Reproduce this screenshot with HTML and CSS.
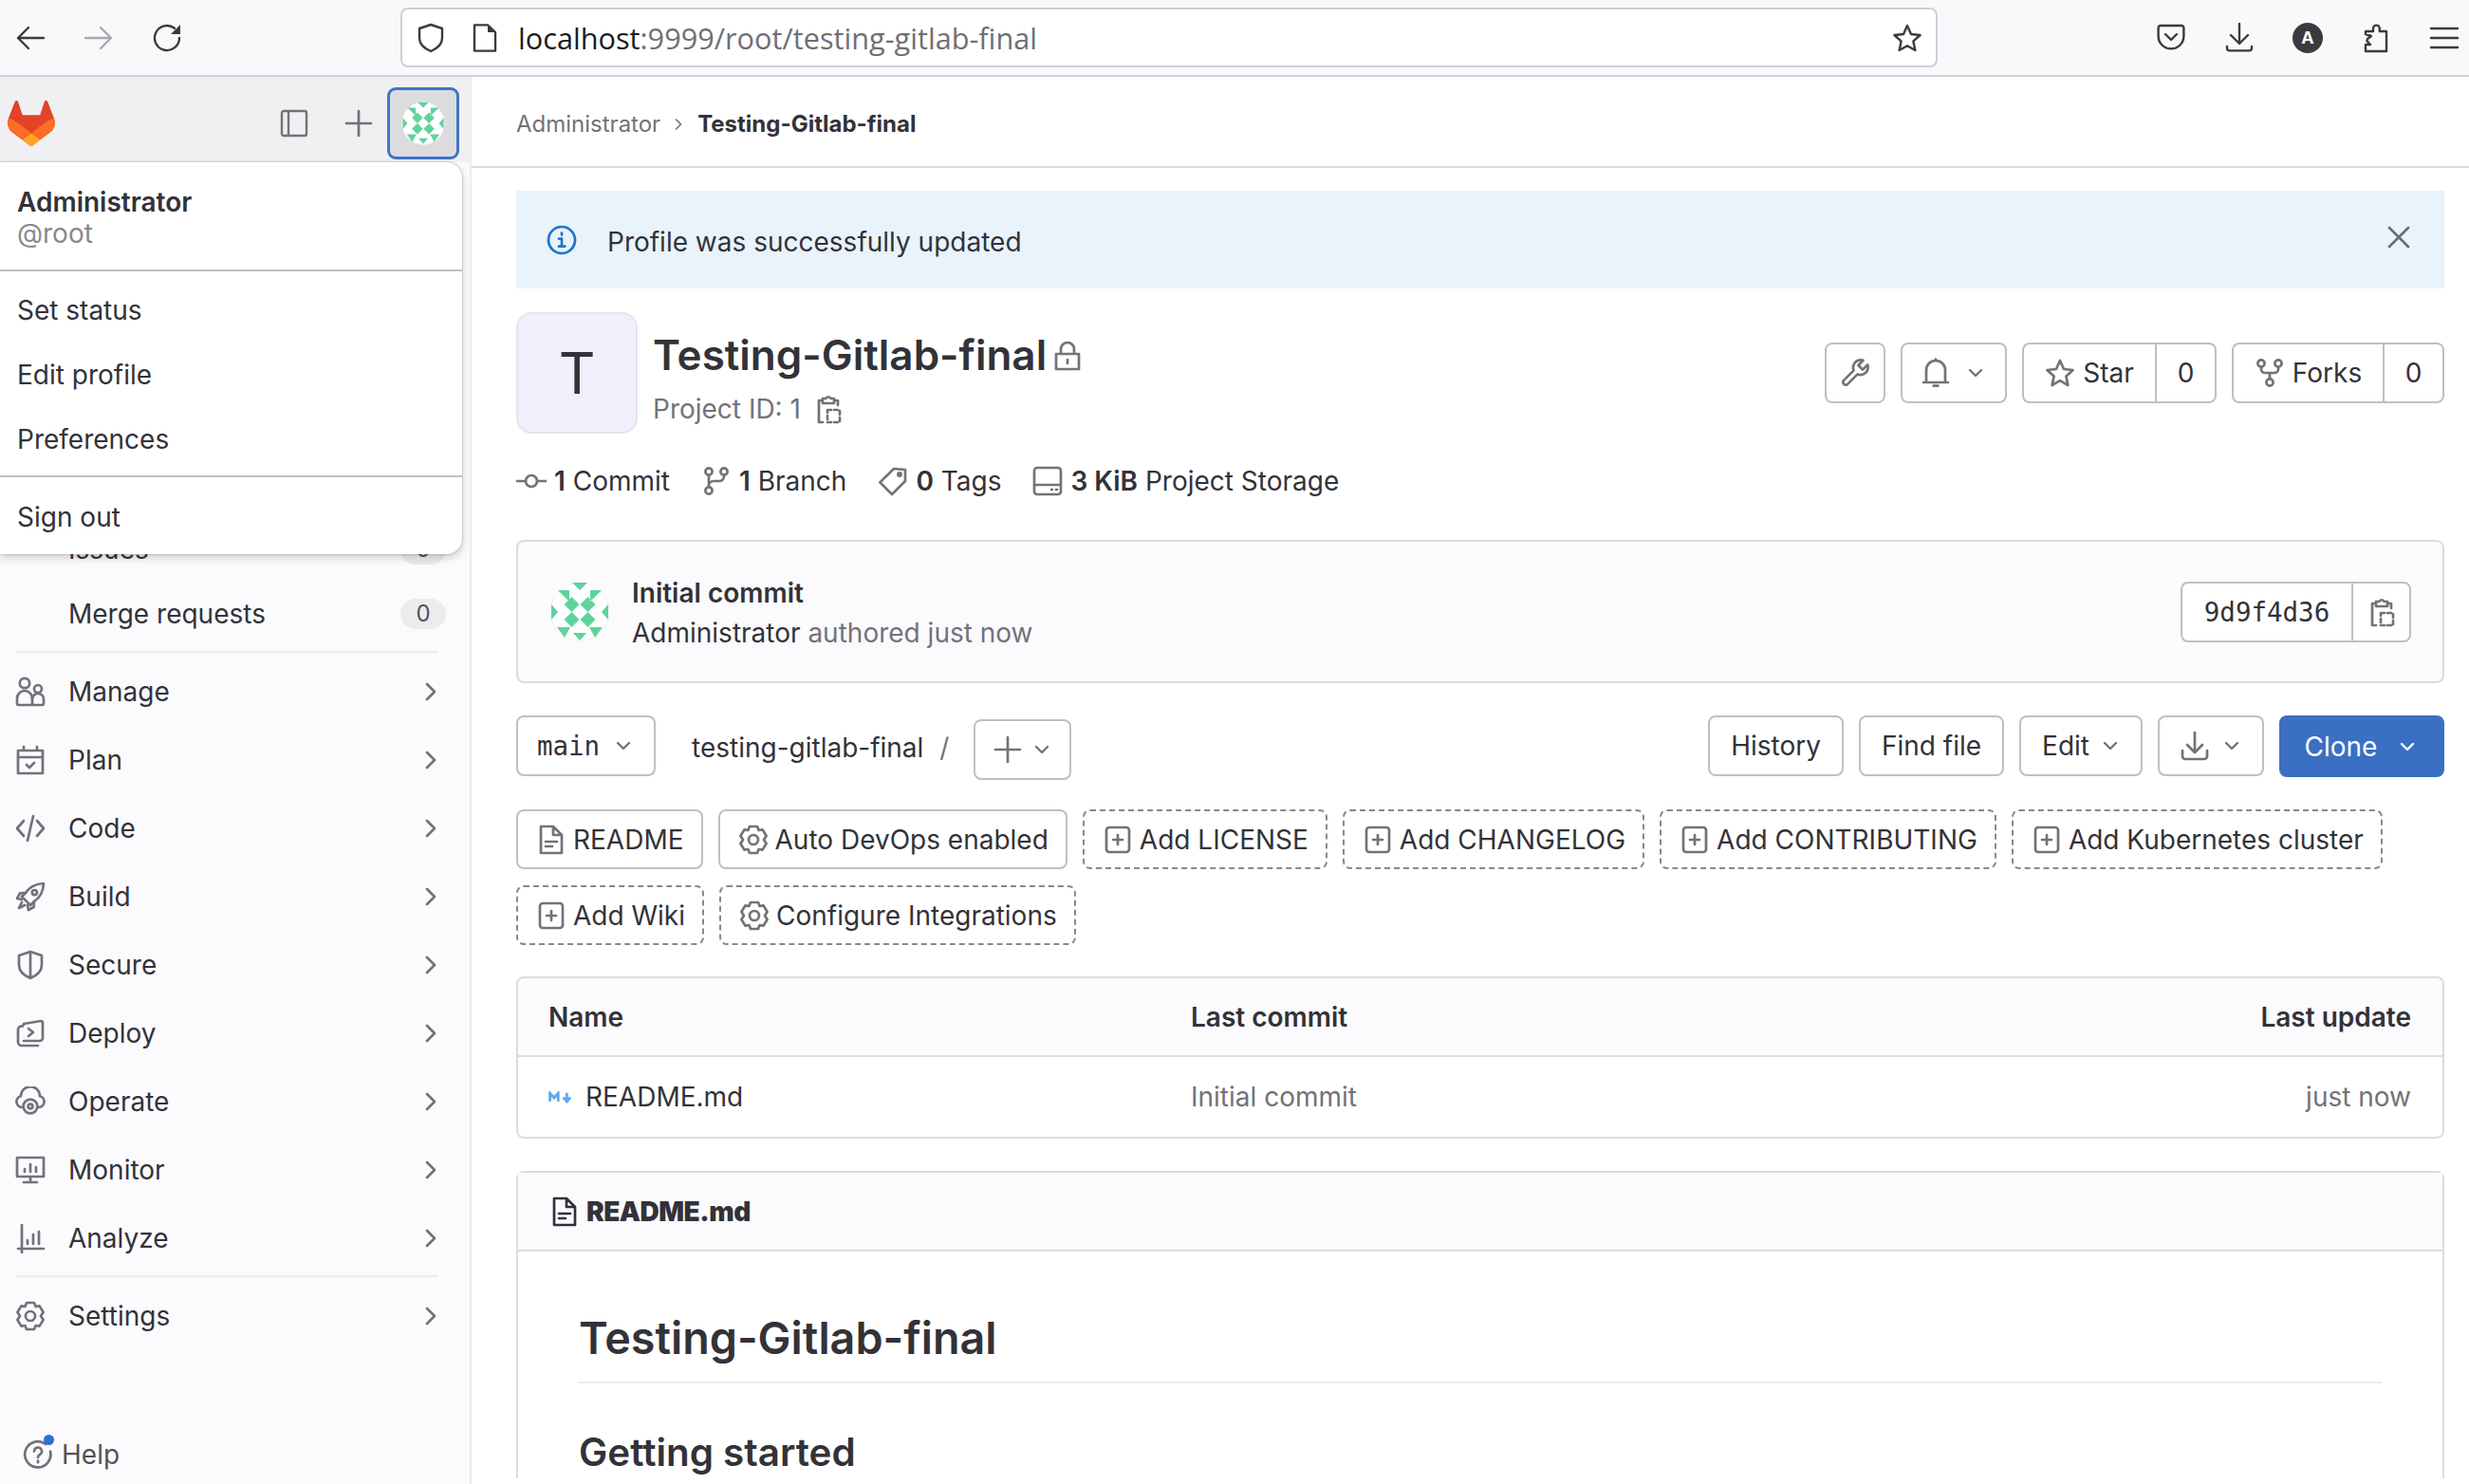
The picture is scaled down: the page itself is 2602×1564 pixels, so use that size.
FILE: index.html
```html
<!DOCTYPE html>
<html lang="en">
<head>
<meta charset="utf-8">
<title>Testing-Gitlab-final</title>
<link rel="stylesheet" href="styles.css">
</head>
<body>
<svg class="sprite" xmlns="http://www.w3.org/2000/svg">
  <symbol id="i-manage" viewBox="0 0 16 16"><circle cx="5" cy="3.5" r="2.6"/><path d="M1 11.5a4 4 0 0 1 8 0v2.9a.6.6 0 0 1-.6.6H1.600a.6.6 0 0 1-.6-.6z"/><circle cx="12" cy="6.500" r="2"/><path d="M9 15h5.400a.6.600 0 0 0 .6-.6v-2.400a3 3 0 0 0-6-.2"/></symbol>
  <symbol id="i-plan" viewBox="0 0 16 16"><path d="M1.500 3h13v12h-13zM1.500 6.500h13M4.500 1v2M11.500 1v2M6 10.500l1.500 1.500 2.500-2.500"/></symbol>
  <symbol id="i-code" viewBox="0 0 16 16"><path d="M4.500 4 1 8l3.500 4M11.500 4 15 8l-3.500 4M9.500 1.500l-3 13"/></symbol>
  <symbol id="i-rocket" viewBox="0 0 16 16"><path d="M15 1c-4 .2-7.300 1.700-9.500 5L3.500 8l4.500 4.500 2-2c3.300-2.200 4.800-5.500 5-9.500z"/><circle cx="10.200" cy="5.800" r="1.300"/><path d="M5.500 6 2.500 6.200 1 9l2.500.5M10 10.500l-.2 3L7 15l-.5-2.500M3.500 11 2 14l3-1.500"/></symbol>
  <symbol id="i-shield" viewBox="0 0 16 16"><path d="M8 1 2 3v5c0 3.500 2.500 5.500 6 7 3.500-1.500 6-3.500 6-7V3zM8 1v14"/></symbol>
  <symbol id="i-deploy" viewBox="0 0 16 16"><path d="M4 4.200h-.5a2 2 0 0 0-2 2v6.300a2 2 0 0 0 2 2h8.500M4.500 3.500V3l9-1.500a1 1 0 0 1 1 1v8a1.500 1.500 0 0 1-1.500 1.500H4.500M7 5.500l2.500 2-2.500 2"/></symbol>
  <symbol id="i-operate" viewBox="0 0 16 16"><path d="M3.500 11a3 3 0 0 1-.5-5.900A5 5 0 0 1 13 5.100a3 3 0 0 1-.5 5.900"/><circle cx="8" cy="10.500" r="3.700"/><circle cx="8" cy="10.500" r="1.200"/></symbol>
  <symbol id="i-monitor" viewBox="0 0 16 16"><path d="M1 1.500h14v10H1zM8 11.500v3M4.500 14.500h7M5 9V7.500M8 9V5M11 9V6.500"/></symbol>
  <symbol id="i-analyze" viewBox="0 0 16 16"><path d="M3.500 1v14.500M1.500 13.500H15M6.500 11V9M9.500 11V6M12.500 11V4.500"/></symbol>
  <symbol id="i-gear" viewBox="0 0 16 16"><path d="M6 1h4l.8 2 2-.3 2 3.300L13.500 8l1.300 2-2 3.300-2-.3-.8 2H6l-.8-2-2 .3-2-3.300L2.500 8 1.200 6l2-3.300 2 .3z"/><circle cx="8" cy="8" r="2.500"/></symbol>
  <symbol id="i-right" viewBox="0 0 16 16"><path d="M6 4l4 4-4 4"/></symbol>
  <symbol id="i-down" viewBox="0 0 16 16"><path d="M4 6l4 4 4-4"/></symbol>
  <symbol id="i-help" viewBox="0 0 16 16"><path d="M12 2.500a6.800 6.800 0 1 0 2.500 3.800M6 6.300a2 2 0 1 1 3 1.700c-.7.400-1 .8-1 1.500M8 11.300v.8"/></symbol>
  <symbol id="i-info" viewBox="0 0 16 16"><circle cx="8" cy="8" r="7"/><path d="M6.500 7.300H8v4M6.500 11.300h3.200M8 4.300v1"/></symbol>
  <symbol id="i-close" viewBox="0 0 16 16"><path d="M3 3l10 10M13 3 3 13"/></symbol>
  <symbol id="i-lock" viewBox="0 0 16 16"><path d="M2 7h12v8H2zM4.500 7V4.500a3.500 3.500 0 0 1 7 0V7M8 10v2"/></symbol>
  <symbol id="i-copy" viewBox="0 0 16 16"><path d="M5 15H3V3.500H5M11 3.500h2V6M5 2.500h1.700a1.400 1.400 0 0 1 2.600 0H11v2.500H5z"/><path class="dash" d="M7.500 8.500h6.500v6.500H7.500z"/></symbol>
  <symbol id="i-wrench" viewBox="0 0 16 16"><path d="M10.500 1.200a4 4 0 0 0-3.200 5.500L1.800 12.200a1.500 1.500 0 0 0 2 2l5.500-5.500a4 4 0 0 0 5.500-3.200c.1-.6 0-1.300-.2-1.800L12 6.300 9.700 4l2.600-2.600c-.6-.2-1.200-.3-1.800-.2z"/></symbol>
  <symbol id="i-bell" viewBox="0 0 16 16"><path d="M1.500 13h13M3 13V6.500a5 5 0 0 1 10 0V13M8 .8v.8M6.800 14.800h2.400"/></symbol>
  <symbol id="i-star" viewBox="0 0 16 16"><path d="M8 1.500l2 4.500 4.800.5-3.600 3.200 1 4.800L8 12.100l-4.200 2.400 1-4.800L1.200 6.500 6 6z"/></symbol>
  <symbol id="i-fork" viewBox="0 0 16 16"><circle cx="3.500" cy="3" r="1.800"/><circle cx="12.500" cy="3" r="1.800"/><circle cx="8" cy="13" r="1.800"/><path d="M3.500 4.800V6a2 2 0 0 0 2 2h5a2 2 0 0 0 2-2V4.800M8 8v3.200"/></symbol>
  <symbol id="i-commit" viewBox="0 0 16 16"><circle cx="8" cy="8" r="3"/><path d="M0 8h5M11 8h5"/></symbol>
  <symbol id="i-branch" viewBox="0 0 16 16"><circle cx="4" cy="3" r="1.800"/><circle cx="12" cy="3" r="1.800"/><circle cx="4" cy="13" r="1.800"/><path d="M4 4.800v6.400M12 4.800V5.500a2.500 2.500 0 0 1-2.500 2.500H6.500A2.500 2.500 0 0 0 4 10.500"/></symbol>
  <symbol id="i-tag" viewBox="0 0 16 16"><path d="M14.500 2v6L7.500 15 1.200 8.700 8.500 1.500z"/><circle cx="11.500" cy="4.500" r=".8"/></symbol>
  <symbol id="i-disk" viewBox="0 0 16 16"><path d="M2.500 1h11A1.500 1.500 0 0 1 15 2.500v11a1.500 1.500 0 0 1-1.500 1.500h-11A1.500 1.500 0 0 1 1 13.500v-11A1.500 1.500 0 0 1 2.500 1zM1 10h14M10 12.500h.5M12.500 12.500h.5"/></symbol>
  <symbol id="i-doc" viewBox="0 0 16 16"><path d="M2.500 1H9l4.500 4.500V15h-11zM9 1v4.500h4.500M5 9h6M5 11.500h3.500"/></symbol>
  <symbol id="i-plus-sq" viewBox="0 0 16 16"><rect x="2" y="1.500" width="12" height="13" rx="1.500"/><path d="M8 5.500v5M5.500 8h5"/></symbol>
  <symbol id="i-plus" viewBox="0 0 16 16"><path d="M8 1.500v13M1.500 8h13"/></symbol>
  <symbol id="i-dl" viewBox="0 0 16 16"><path d="M8 1v10M4 7.500 8 11.500l4-4M1.500 10.500v3a1.500 1.500 0 0 0 1.500 1.500h10a1.500 1.500 0 0 0 1.500-1.500v-3"/></symbol>
  <symbol id="i-panel" viewBox="0 0 16 16"><rect x="1.500" y="1.500" width="13" height="13" rx="1"/><path d="M5 1.500v13"/></symbol>
  <symbol id="logo" viewBox="0 0 25 24">
    <path fill="#E24329" stroke="none" d="m24.507 9.5-.034-.09L21.082.562a.896.896 0 0 0-1.694.091l-2.29 7.01H7.825L5.535.653a.898.898 0 0 0-1.694-.09L.451 9.411.416 9.5a6.297 6.297 0 0 0 2.09 7.278l.012.01.03.022 5.16 3.867 2.56 1.935 1.554 1.176a1.051 1.051 0 0 0 1.268 0l1.555-1.176 2.56-1.935 5.197-3.89.014-.01A6.297 6.297 0 0 0 24.507 9.5Z"/>
    <path fill="#FC6D26" stroke="none" d="m24.507 9.5-.034-.09a11.44 11.44 0 0 0-4.56 2.051l-7.447 5.632 4.742 3.584 5.197-3.89.014-.01A6.297 6.297 0 0 0 24.507 9.5Z"/>
    <path fill="#FCA326" stroke="none" d="m7.707 20.677 2.56 1.935 1.555 1.176a1.051 1.051 0 0 0 1.268 0l1.555-1.176 2.56-1.935-4.743-3.584-4.755 3.584Z"/>
    <path fill="#FC6D26" stroke="none" d="M5.01 11.461a11.43 11.43 0 0 0-4.56-2.05L.416 9.5a6.297 6.297 0 0 0 2.09 7.278l.012.01.03.022 5.16 3.867 4.745-3.584-7.444-5.632Z"/>
  </symbol>
  <symbol id="identicon" viewBox="0 0 64 64">
    <circle cx="32" cy="32" r="31.500" fill="#f4f5f4"/>
    <path fill="#fff" stroke="none" d="M32 2a30 30 0 1 0 .01 0z"/>
    <path fill="#5fd39c" stroke="none" d="M23.500 16l8 8-8 8-8-8zM40.500 16l8 8-8 8-8-8zM23.500 32l8 8-8 8-8-8zM40.500 32l8 8-8 8-8-8zM24 1h16l-8 8zM9 9h12v12zM55 9H43v12zM2 24l7 8-7 8zM62 24l-7 8 7 8zM8 48h14l-6 11zM56 48H42l6 11zM25 54h14l-7 8z"/>
  </symbol>
</svg>

<header class="browser">
  <div class="browser-nav">
    <svg class="ficon" viewBox="0 0 16 16"><path d="M15 8H1.500M7 2.500 1.500 8 7 13.500"/></svg>
    <svg class="ficon ficon-dim" viewBox="0 0 16 16"><path d="M1 8h13.500M9 2.500 14.500 8 9 13.500"/></svg>
    <svg class="ficon" viewBox="0 0 16 16"><path d="M14.500 8A6.500 6.500 0 1 1 12 2.900"/><path class="solid" d="M15 1v5h-5z"/></svg>
  </div>
  <div class="urlbar">
    <svg class="ficon" viewBox="0 0 16 16"><path d="M8 1 2 3v5c0 3.500 2.500 5.500 6 7 3.500-1.500 6-3.500 6-7V3z"/></svg>
    <svg class="ficon" viewBox="0 0 16 16"><path d="M2.500 1.200h7L13.500 5v9.800h-11z"/><path class="solid" d="M9.500 1.200 13.500 5h-4z"/></svg>
    <span class="url"><span class="url-host">localhost</span>:9999/root/testing-gitlab-final</span>
    <svg class="ficon url-star" viewBox="0 0 16 16"><path d="M8 1.500l2 4.500 4.800.5-3.600 3.200 1 4.800L8 12.100l-4.200 2.400 1-4.800L1.200 6.500 6 6z"/></svg>
  </div>
  <div class="browser-tools">
    <svg class="ficon" viewBox="0 0 16 16"><path d="M2.500 1.500h11a1.200 1.200 0 0 1 1.200 1.200v4.300a6.700 6.700 0 0 1-13.400 0V2.700a1.200 1.200 0 0 1 1.200-1.200zM5 6l3 3 3-3"/></svg>
    <svg class="ficon" viewBox="0 0 16 16"><path d="M8 .5v10M3.500 6.500 8 11l4.500-4.500M1.500 12.500v1a1.200 1.200 0 0 0 1.200 1.200h10.600a1.200 1.200 0 0 0 1.200-1.200v-1"/></svg>
    <span class="profile">A</span>
    <svg class="ficon" viewBox="0 0 16 16"><path d="M2.500 15V11.500H5l-1.800-2 .3-1L5.500 7 2.500 6V4.500H6.500V3a1.700 1.700 0 0 1 3.400 0v1.500H13.500V15z"/></svg>
    <svg class="ficon" viewBox="0 0 16 16"><path d="M1 3h14M1 8h14M1 13h14"/></svg>
  </div>
</header>

<div class="app">
  <aside class="sidebar">
    <div class="side-top">
      <svg class="logo"><use href="#logo"/></svg>
      <svg class="ico side-panel"><use href="#i-panel"/></svg>
      <svg class="ico side-plus"><use href="#i-plus"/></svg>
      <span class="side-avatar"><svg class="avatar-sm"><use href="#identicon"/></svg></span>
    </div>
    <div class="usermenu">
      <div class="um-head"><strong class="um-name">Administrator</strong><span class="um-user">@root</span></div>
      <div class="um-group">
        <a class="um-item">Set status</a>
        <a class="um-item">Edit profile</a>
        <a class="um-item">Preferences</a>
      </div>
      <div class="um-group um-last"><a class="um-item">Sign out</a></div>
    </div>
    <nav class="side-nav">
      <a class="nav-item nav-item-short"><span class="nav-label">Issues</span><span class="nav-badge">0</span></a>
      <a class="nav-item"><span class="nav-label">Merge requests</span><span class="nav-badge">0</span></a>
      <hr class="nav-rule">
      <a class="nav-item"><svg class="ico"><use href="#i-manage"/></svg><span class="nav-label">Manage</span><svg class="ico chev"><use href="#i-right"/></svg></a>
      <a class="nav-item"><svg class="ico"><use href="#i-plan"/></svg><span class="nav-label">Plan</span><svg class="ico chev"><use href="#i-right"/></svg></a>
      <a class="nav-item"><svg class="ico"><use href="#i-code"/></svg><span class="nav-label">Code</span><svg class="ico chev"><use href="#i-right"/></svg></a>
      <a class="nav-item"><svg class="ico"><use href="#i-rocket"/></svg><span class="nav-label">Build</span><svg class="ico chev"><use href="#i-right"/></svg></a>
      <a class="nav-item"><svg class="ico"><use href="#i-shield"/></svg><span class="nav-label">Secure</span><svg class="ico chev"><use href="#i-right"/></svg></a>
      <a class="nav-item"><svg class="ico"><use href="#i-deploy"/></svg><span class="nav-label">Deploy</span><svg class="ico chev"><use href="#i-right"/></svg></a>
      <a class="nav-item"><svg class="ico"><use href="#i-operate"/></svg><span class="nav-label">Operate</span><svg class="ico chev"><use href="#i-right"/></svg></a>
      <a class="nav-item"><svg class="ico"><use href="#i-monitor"/></svg><span class="nav-label">Monitor</span><svg class="ico chev"><use href="#i-right"/></svg></a>
      <a class="nav-item"><svg class="ico"><use href="#i-analyze"/></svg><span class="nav-label">Analyze</span><svg class="ico chev"><use href="#i-right"/></svg></a>
      <hr class="nav-rule">
      <a class="nav-item"><svg class="ico"><use href="#i-gear"/></svg><span class="nav-label">Settings</span><svg class="ico chev"><use href="#i-right"/></svg></a>
    </nav>
    <a class="help"><span class="help-ico"><svg class="ico"><use href="#i-help"/></svg><i class="help-dot"></i></span>Help</a>
  </aside>

  <main class="main">
    <div class="crumbs"><span class="crumb">Administrator</span><svg class="ico crumb-sep"><use href="#i-right"/></svg><strong class="crumb-cur">Testing-Gitlab-final</strong></div>
    <div class="page">
      <div class="alert">
        <svg class="ico alert-ico"><use href="#i-info"/></svg>
        <span class="alert-text">Profile was successfully updated</span>
        <svg class="ico alert-x"><use href="#i-close"/></svg>
      </div>

      <section class="proj">
        <div class="proj-avatar">T</div>
        <div class="proj-info">
          <h1 class="proj-title">Testing-Gitlab-final <svg class="ico lock"><use href="#i-lock"/></svg></h1>
          <div class="proj-id">Project ID: 1 <svg class="ico copy-sm"><use href="#i-copy"/></svg></div>
        </div>
        <div class="proj-actions">
          <button class="btn w-wrench"><svg class="ico"><use href="#i-wrench"/></svg></button>
          <button class="btn w-bell"><svg class="ico"><use href="#i-bell"/></svg><svg class="ico chev-d"><use href="#i-down"/></svg></button>
          <div class="split w-star"><button class="btn part-a"><svg class="ico"><use href="#i-star"/></svg>Star</button><button class="btn part-b">0</button></div>
          <div class="split w-forks"><button class="btn part-a"><svg class="ico"><use href="#i-fork"/></svg>Forks</button><button class="btn part-b">0</button></div>
        </div>
      </section>

      <div class="stats">
        <span class="stat"><svg class="ico"><use href="#i-commit"/></svg><span><b>1</b> Commit</span></span>
        <span class="stat"><svg class="ico"><use href="#i-branch"/></svg><span><b>1</b> Branch</span></span>
        <span class="stat"><svg class="ico"><use href="#i-tag"/></svg><span><b>0</b> Tags</span></span>
        <span class="stat"><svg class="ico"><use href="#i-disk"/></svg><span><b>3 KiB</b> Project Storage</span></span>
      </div>

      <section class="commit">
        <svg class="commit-avatar"><use href="#identicon"/></svg>
        <div class="commit-text">
          <strong class="commit-title">Initial commit</strong>
          <span class="commit-meta">Administrator <span class="muted">authored just now</span></span>
        </div>
        <div class="split sha"><button class="btn part-a mono">9d9f4d36</button><button class="btn part-b"><svg class="ico"><use href="#i-copy"/></svg></button></div>
      </section>

      <div class="repo-bar">
        <button class="btn mono w-main">main<svg class="ico chev-d"><use href="#i-down"/></svg></button>
        <span class="repo-path">testing-gitlab-final</span>
        <span class="repo-slash">/</span>
        <button class="btn w-add"><svg class="ico"><use href="#i-plus"/></svg><svg class="ico chev-d"><use href="#i-down"/></svg></button>
        <div class="repo-right">
          <button class="btn">History</button>
          <button class="btn">Find file</button>
          <button class="btn w-edit">Edit<svg class="ico chev-d"><use href="#i-down"/></svg></button>
          <button class="btn w-dl"><svg class="ico"><use href="#i-dl"/></svg><svg class="ico chev-d"><use href="#i-down"/></svg></button>
          <button class="btn btn-primary">Clone<svg class="ico chev-d"><use href="#i-down"/></svg></button>
        </div>
      </div>

      <div class="shortcuts">
        <a class="chip"><svg class="ico"><use href="#i-doc"/></svg>README</a>
        <a class="chip"><svg class="ico"><use href="#i-gear"/></svg>Auto DevOps enabled</a>
        <a class="chip chip-dash"><svg class="ico"><use href="#i-plus-sq"/></svg>Add LICENSE</a>
        <a class="chip chip-dash"><svg class="ico"><use href="#i-plus-sq"/></svg>Add CHANGELOG</a>
        <a class="chip chip-dash"><svg class="ico"><use href="#i-plus-sq"/></svg>Add CONTRIBUTING</a>
        <a class="chip chip-dash"><svg class="ico"><use href="#i-plus-sq"/></svg>Add Kubernetes cluster</a>
        <a class="chip chip-dash"><svg class="ico"><use href="#i-plus-sq"/></svg>Add Wiki</a>
        <a class="chip chip-dash"><svg class="ico"><use href="#i-gear"/></svg>Configure Integrations</a>
      </div>

      <section class="files">
        <div class="row row-head"><span class="col-name">Name</span><span class="col-commit">Last commit</span><span class="col-date">Last update</span></div>
        <div class="row row-body">
          <span class="col-name file-name"><svg class="md-ico" viewBox="0 0 26 12"><path d="M1.500 10V2l4 4.500 4-4.500v8M18 1.500V9M14.500 6l3.500 4 3.500-4"/></svg>README.md</span>
          <span class="col-commit muted">Initial commit</span>
          <span class="col-date muted">just now</span>
        </div>
      </section>

      <section class="readme">
        <div class="readme-head"><svg class="ico"><use href="#i-doc"/></svg><strong>README.md</strong></div>
        <article class="readme-body">
          <h1 class="md-h1">Testing-Gitlab-final</h1>
          <h2 class="md-h2">Getting started</h2>
        </article>
      </section>
    </div>
  </main>
</div>
</body>
</html>
```
FILE: styles.css
```css
* { box-sizing: border-box; }
html, body { height: 100%; }
body {
  margin: 0;
  height: 1564px;
  overflow: hidden;
  display: flex;
  flex-direction: column;
  font-family: Inter, "Noto Sans", sans-serif;
  font-size: 28px;
  line-height: 40px;
  color: #333238;
  background: #fff;
}
.sprite { position: absolute; width: 0; height: 0; overflow: hidden; }

/* shared icon */
.ico {
  width: 32px;
  height: 32px;
  flex: none;
  fill: none;
  stroke: #737278;
  stroke-width: 1.35;
  stroke-linecap: round;
  stroke-linejoin: round;
}
.dash { stroke-dasharray: 2 1.500; }

/* browser toolbar */
.browser {
  height: 81px;
  flex: none;
  display: flex;
  align-items: center;
  background: #f9f9fb;
  border-bottom: 2px solid #cfcfd8;
  padding: 0 10px 0 16px;
}
.ficon {
  width: 32px;
  height: 32px;
  flex: none;
  fill: none;
  stroke: #3a3a3f;
  stroke-width: 1.2;
  stroke-linejoin: round;
  stroke-linecap: round;
}
.ficon .solid { fill: #3a3a3f; stroke: none; }
.ficon-dim { stroke: #a9a9ae; }
.browser-nav { display: flex; gap: 40px; width: 406px; }
.urlbar {
  width: 1620px;
  height: 63px;
  display: flex;
  align-items: center;
  gap: 25px;
  padding: 0 14px 0 14px;
  background: #fff;
  border: 2px solid #cfcfd8;
  border-radius: 8px;
}
.url {
  flex: 1;
  margin-left: -6px;
  font-family: "Open Sans", sans-serif;
  font-size: 30.7px;
  color: #6f6f74;
}
.url-host { color: #1c1b22; }
.browser-tools {
  margin-left: auto;
  display: flex;
  align-items: center;
  gap: 40px;
}
.profile {
  width: 32px;
  height: 32px;
  border-radius: 50%;
  background: #3a3a3f;
  color: #fff;
  font-size: 18px;
  font-weight: 700;
  line-height: 32px;
  text-align: center;
}

/* app frame */
.app { flex: 1; display: flex; min-height: 0; }
.sidebar {
  position: relative;
  width: 497px;
  flex: none;
  display: flex;
  flex-direction: column;
  background: #fbfafd;
  border-right: 2px solid #ececef;
}
.side-top {
  height: 90px;
  flex: none;
  display: flex;
  align-items: center;
  padding: 8px 12px 0 8px;
  background: #f0f0f3;
}
.logo { width: 50px; height: 48px; }
.side-panel { margin-left: auto; stroke-width: 1.2; }
.side-plus { margin-left: 36px; }
.side-avatar {
  width: 74px;
  height: 74px;
  margin-left: 15px;
  display: flex;
  align-items: center;
  justify-content: center;
  background: #dcdcde;
  border-radius: 8px;
  outline: 3px solid #3f74c9;
  outline-offset: -2px;
}
.avatar-sm { width: 46px; height: 46px; }

/* user dropdown */
.usermenu {
  position: absolute;
  left: 0;
  top: 90px;
  width: 487px;
  height: 413px;
  background: #fff;
  border-radius: 0 16px 16px 0;
  box-shadow: 0 0 2px rgba(31, 30, 36, .4), 0 4px 10px rgba(31, 30, 36, .2);
  z-index: 5;
  display: flex;
  flex-direction: column;
}
.um-head {
  height: 115px;
  flex: none;
  padding: 25px 18px 0;
  display: flex;
  flex-direction: column;
  border-bottom: 2px solid #bfbfc3;
}
.um-name { font-weight: 600; line-height: 34px; }
.um-user { color: #89888d; line-height: 32px; }
.um-group { padding: 7px 0 4px; border-bottom: 2px solid #bfbfc3; }
.um-last { border-bottom: 0; padding-top: 8px; }
.um-item { display: block; height: 68px; line-height: 68px; padding: 0 18px; color: #333238; }

/* side nav */
.side-nav { display: flex; flex-direction: column; padding: 0 16px; margin-top: 376px; }
.nav-item { height: 72px; display: flex; align-items: center; gap: 24px; flex: none; }
.nav-item-short { height: 64px; }
.nav-label { flex: 1; }
.nav-item > .nav-label:first-child { margin-left: 56px; }
.nav-badge {
  width: 48px;
  height: 32px;
  margin-right: 9px;
  border-radius: 16px;
  background: #ececef;
  color: #535158;
  font-size: 24px;
  line-height: 32px;
  text-align: center;
}
.chev { margin-right: 9px; width: 32px; }
.nav-rule { width: 446px; height: 2px; margin: 3px 0 5px; border: 0; background: #ececef; flex: none; }
.help {
  margin-top: auto;
  height: 62px;
  display: flex;
  align-items: center;
  padding-left: 24px;
  color: #535158;
}
.help-ico { position: relative; display: flex; margin-right: 1px; width: 40px; }
.help-dot {
  position: absolute;
  left: 22px;
  top: -5px;
  width: 11px;
  height: 11px;
  border-radius: 50%;
  background: #2f6fd0;
}

/* main column */
.main { flex: 1; min-width: 0; display: flex; flex-direction: column; }
.crumbs {
  height: 96px;
  flex: none;
  display: flex;
  align-items: center;
  padding: 6px 0 0 47px;
  border-bottom: 2px solid #dcdcde;
  font-size: 24px;
}
.crumb { color: #737278; }
.crumb-sep { width: 20px; height: 20px; margin: 0 10px 0 9px; }
.crumb-cur { font-weight: 700; }
.page { padding: 24px 26px 0 47px; }

.alert {
  height: 103px;
  display: flex;
  align-items: center;
  padding: 0 32px;
  background: #e9f3fc;
}
.alert-ico { stroke: #1f75cb; }
.alert-text { flex: 1; margin-left: 32px; padding-top: 4px; }
.alert-x { margin-top: -6px; stroke: #6b6b74; }

/* project header */
.proj { display: flex; align-items: flex-start; margin-top: 25px; }
.proj-avatar {
  width: 128px;
  height: 128px;
  display: flex;
  align-items: center;
  justify-content: center;
  border: 2px solid #e6e4ef;
  border-radius: 16px;
  background: #f0effb;
  font-size: 60px;
  color: #333238;
}
.proj-info { margin-left: 16px; padding-top: 16px; }
.proj-title {
  margin: 0;
  display: flex;
  align-items: center;
  gap: 6px;
  font-size: 44px;
  line-height: 58px;
  font-weight: 600;
}
.lock { margin-top: 2px; }
.proj-id { margin-top: 8px; display: flex; align-items: center; gap: 13px; color: #737278; }
.proj-actions { margin-left: auto; margin-top: 32px; display: flex; gap: 16px; }

.btn {
  height: 64px;
  display: inline-flex;
  align-items: center;
  justify-content: center;
  gap: 8px;
  padding: 0 22px;
  background: #fff;
  border: 2px solid #bfbfc3;
  border-radius: 8px;
  font: inherit;
  color: #333238;
}
.w-wrench { width: 64px; padding: 0; }
.w-bell { width: 112px; padding: 0; gap: 14px; }
.split { display: flex; }
.part-a { border-radius: 8px 0 0 8px; border-right: 0; }
.part-b { border-radius: 0 8px 8px 0; padding: 0; width: 65px; }
.w-star .part-a { width: 140px; padding: 0; }
.w-forks .part-a { width: 159px; padding: 0; }
.chev-d { width: 24px; height: 24px; stroke-width: 1.6; }

.stats { display: flex; gap: 33px; margin-top: 30px; height: 40px; }
.stat { display: flex; align-items: center; gap: 8px; white-space: nowrap; }
.stat b { font-weight: 600; }

/* commit */
.commit {
  height: 151px;
  margin-top: 42px;
  display: flex;
  align-items: center;
  padding: 0 33px;
  background: #fbfafd;
  border: 2px solid #dcdcde;
  border-radius: 8px;
}
.commit-avatar { width: 64px; height: 64px; flex: none; }
.commit-text { margin-left: 23px; padding-top: 2px; display: flex; flex-direction: column; gap: 2px; flex: 1; }
.commit-title { font-weight: 600; }
.muted { color: #737278; }
.mono { font-family: "DejaVu Sans Mono", monospace; font-size: 27.5px; }
.sha .part-a { width: 180px; padding: 0; }
.sha .part-b { width: 63px; }

/* repo bar */
.repo-bar { display: flex; align-items: flex-start; margin-top: 34px; }
.w-main { width: 147px; padding: 0; gap: 13px; }
.repo-path { margin-left: 38px; margin-top: 14px; }
.repo-slash { margin-left: 17px; margin-top: 14px; color: #737278; }
.w-add { width: 103px; margin-left: 26px; margin-top: 4px; padding: 0; gap: 8px; }
.repo-right { margin-left: auto; display: flex; gap: 16px; }
.w-edit { gap: 10px; padding: 0 20px 0 22px; }
.w-dl { padding: 0; width: 112px; gap: 11px; }
.btn-primary { background: #3a6fc4; border-color: #3a6fc4; color: #fff; width: 174px; height: 65px; padding: 0; gap: 20px; }
.btn-primary .chev-d { stroke: #fff; }

/* shortcuts */
.shortcuts { display: flex; flex-wrap: wrap; gap: 17px 16px; margin-top: 31px; }
.chip {
  height: 63px;
  display: inline-flex;
  align-items: center;
  gap: 7px;
  padding: 0 18px 0 19px;
  border: 2px solid #bfbfc3;
  border-radius: 8px;
  white-space: nowrap;
}
.chip-dash { border: 2px dashed #89888d; }

/* files */
.files { margin-top: 33px; border: 2px solid #dcdcde; border-radius: 8px; overflow: hidden; }
.row { display: flex; align-items: center; padding: 0 33px 0 32px; }
.row-head { height: 83px; background: #fbfafd; border-bottom: 2px solid #dcdcde; font-weight: 600; }
.row-body { height: 84px; }
.col-name { width: 677px; }
.col-commit { flex: 1; }
.col-date { text-align: right; }
.file-name { display: flex; align-items: center; gap: 11px; }
.md-ico { width: 28px; height: 13px; fill: none; stroke: #5aa8f0; stroke-width: 2.6; flex: none; }

/* readme */
.readme { margin-top: 34px; border: 2px solid #dcdcde; border-bottom: 0; border-radius: 8px 8px 0 0; }
.readme-head {
  height: 83px;
  display: flex;
  align-items: center;
  gap: 7px;
  padding-left: 33px;
  background: #fbfafd;
  border-bottom: 2px solid #dcdcde;
  font-weight: 600;
  letter-spacing: -0.5px;
}
.readme-head .ico { stroke: #333238; }
.readme-body { padding: 60px 64px 0 64px; }
.md-h1 {
  margin: 0;
  padding-bottom: 15px;
  font-size: 46.7px;
  line-height: 62px;
  font-weight: 600;
  border-bottom: 2px solid #ececef;
}
.md-h2 { margin: 46px 0 0; font-size: 40.4px; line-height: 54px; font-weight: 600; }
```
